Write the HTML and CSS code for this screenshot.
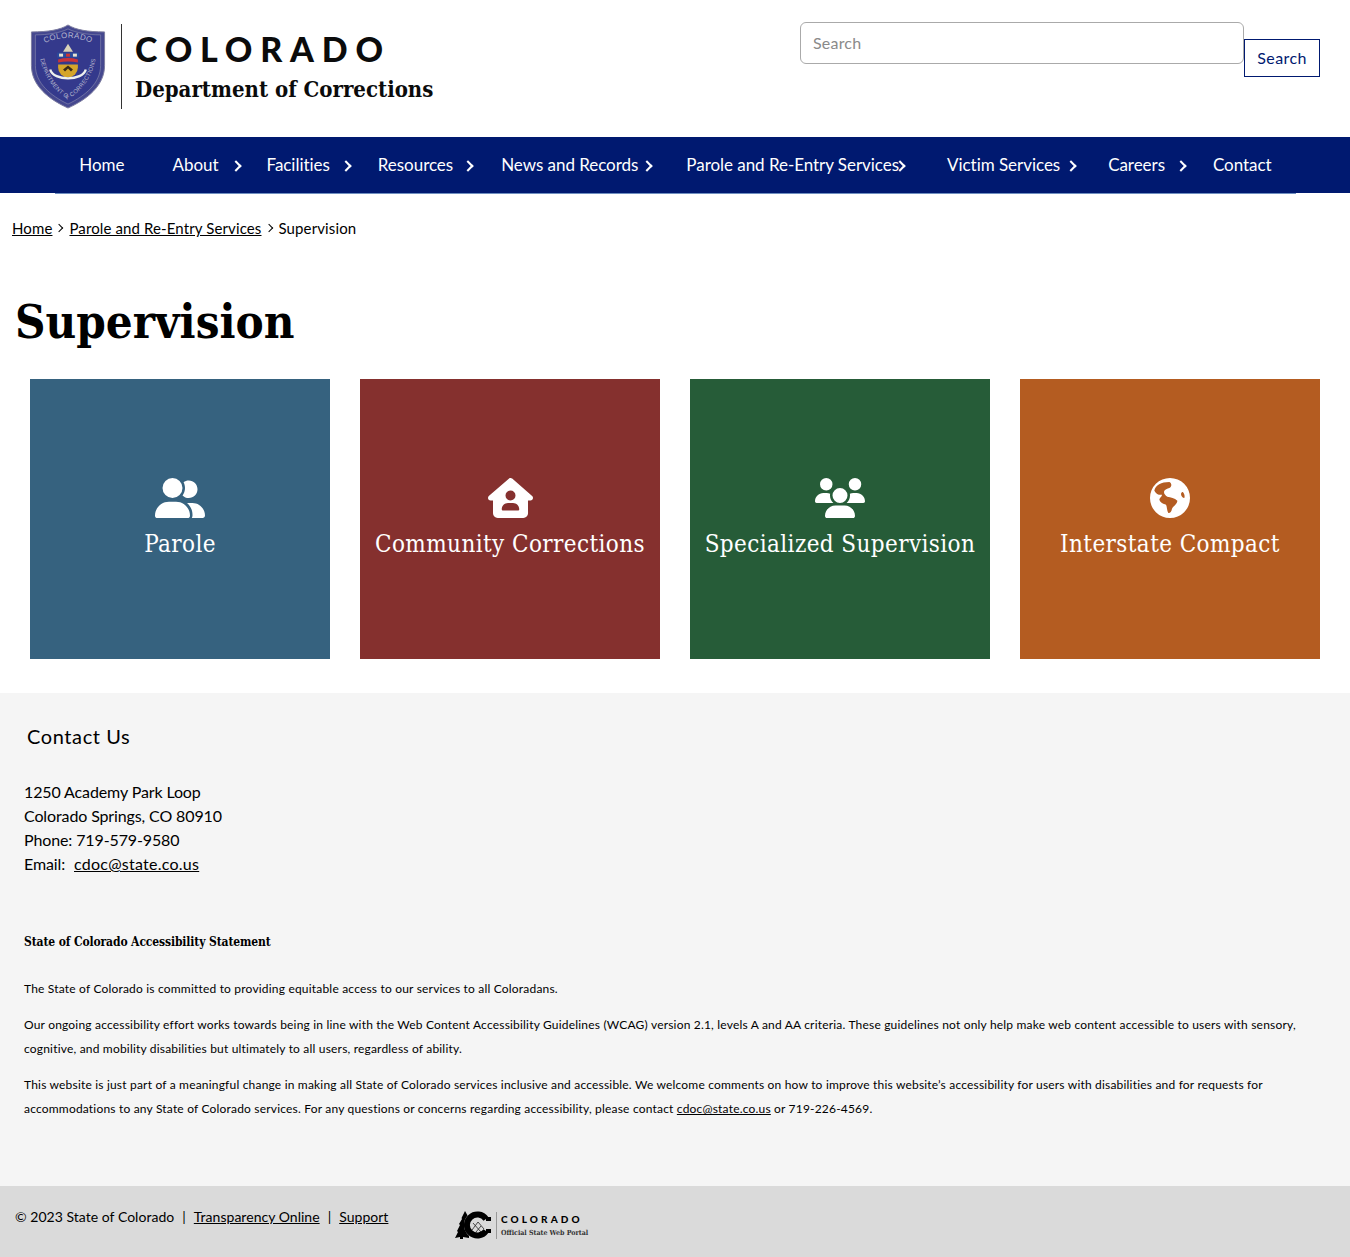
FILE: index.html
```html
<!DOCTYPE html>
<html lang="en">
<head>
	<meta charset="UTF-8">
	<title>Supervision | Department of Corrections</title>
	<link rel="stylesheet" href="styles.css">
</head>
<body>
	<header class="site-head">
		<a class="logo" href="#">
			<svg class="shield" viewBox="0 0 76 86">
				<path d="M38 1 C46 6 58 8 75 8 L75 42 C75 62 58 76 38 85 C18 76 1 62 1 42 L1 8 C18 8 30 6 38 1Z" fill="#45488f" stroke="#7d7da0" stroke-width="1"/>
				<path d="M38 5 C46 9 58 11 71 11 L71 42 C71 60 55 73 38 81 C21 73 5 60 5 42 L5 11 C18 11 30 9 38 5Z" fill="#34398c" stroke="#8d8fb0" stroke-width=".6"/>
				<path id="arc-top" d="M9 22 Q38 6 67 22" fill="none"/>
				<text class="shield-text"><textPath href="#arc-top" startOffset="50%" text-anchor="middle">COLORADO</textPath></text>
				<path id="arc-bot" d="M9 24 C9 50 24 68 38 76 C52 68 67 50 67 24" fill="none"/>
				<text class="shield-text small"><textPath href="#arc-bot" startOffset="50%" text-anchor="middle">DEPARTMENT OF CORRECTIONS</textPath></text>
				<path d="M38 20 l5 8 h-10z" fill="#d9d2b8"/>
				<rect x="27" y="29" width="22" height="5" fill="#2a4a9c"/>
				<rect x="29" y="30" width="4" height="3" fill="#e9e2d0"/>
				<rect x="36" y="30" width="4" height="3" fill="#c33"/>
				<rect x="43" y="30" width="4" height="3" fill="#e9e2d0"/>
				<path d="M28 36 q10 -3 20 0 v3 q-10 -2 -20 0z" fill="#c8333a"/>
				<path d="M28 41 h20 v3 a10 10 0 0 1 -20 0z" fill="#d5a52a"/>
				<path d="M33 46 l5 -4 l5 4 l-2 2 l-3 -3 l-3 3z" fill="#3a2b18"/>
				<path d="M20 46 C23 58 53 58 56 46" fill="none" stroke="#eef0ee" stroke-width="2.400"/>
			</svg>
			<span class="logo-text">
				<span class="logo-state">COLORADO</span>
				<span class="logo-dept">Department of Corrections</span>
			</span>
		</a>
		<form class="search">
			<input class="search-input" type="text" placeholder="Search">
			<button class="search-btn" type="button">Search</button>
		</form>
	</header>

	<nav class="main-nav">
		<ul>
			<li><a href="#">Home</a></li>
			<li class="has-sub"><a href="#">About</a></li>
			<li class="has-sub"><a href="#">Facilities</a></li>
			<li class="has-sub"><a href="#">Resources</a></li>
			<li class="has-sub"><a href="#">News and Records</a></li>
			<li class="has-sub"><a href="#">Parole and Re-Entry Services</a></li>
			<li class="has-sub"><a href="#">Victim Services</a></li>
			<li class="has-sub"><a href="#">Careers</a></li>
			<li><a href="#">Contact</a></li>
		</ul>
	</nav>

	<div class="crumbs">
		<a href="#">Home</a><i class="sep"></i><a href="#">Parole and Re-Entry Services</a><i class="sep"></i><span>Supervision</span>
	</div>

	<h1 class="page-title">Supervision</h1>

	<section class="cards">
		<a class="card blue" href="#">
			<svg class="icon" viewBox="0 0 640 512"><path d="M96 128a128 128 0 1 1 256 0A128 128 0 1 1 96 128zM0 482.3C0 383.8 79.8 304 178.3 304h91.4C368.2 304 448 383.8 448 482.3c0 16.4-13.3 29.7-29.7 29.7H29.7C13.3 512 0 498.7 0 482.3zM609.3 512H471.4c5.4-9.4 8.6-20.3 8.6-32v-8c0-60.7-27.1-115.2-69.8-151.8c2.4-.1 4.7-.2 7.1-.2h61.4C567.8 320 640 392.2 640 481.3c0 17-13.8 30.7-30.7 30.7zM432 256c-31 0-59-12.6-79.3-32.9C372.4 196.5 384 163.6 384 128c0-26.8-6.6-52.1-18.3-74.3C384.3 40.1 407.2 32 432 32c61.9 0 112 50.1 112 112s-50.1 112-112 112z"/></svg>
			<span>Parole</span>
		</a>
		<a class="card red" href="#">
			<svg class="icon" viewBox="0 0 576 512"><path d="M575.8 255.5c0 18-15 32.1-32 32.1h-32l.7 160.2c.2 35.5-28.5 64.3-64 64.3H128.1c-35.3 0-64-28.7-64-64V287.6H32c-18 0-32-14-32-32.1c0-9 3-17 10-24L266.4 8c7-7 15-8 22-8s15 2 21 7L564.8 231.5c8 7 12 15 11 24zM352 224a64 64 0 1 0 -128 0 64 64 0 1 0 128 0zm-96 96c-44.2 0-80 35.8-80 80c0 8.8 7.2 16 16 16H384c8.8 0 16-7.2 16-16c0-44.2-35.8-80-80-80H256z"/></svg>
			<span>Community Corrections</span>
		</a>
		<a class="card green" href="#">
			<svg class="icon" viewBox="0 0 640 512"><path d="M144 0a80 80 0 1 1 0 160A80 80 0 1 1 144 0zM512 0a80 80 0 1 1 0 160A80 80 0 1 1 512 0zM0 298.7C0 239.8 47.8 192 106.7 192h42.7c15.9 0 31 3.5 44.6 9.7c-1.3 7.2-1.9 14.7-1.9 22.3c0 38.2 16.8 72.5 43.3 96c-.2 0-.4 0-.7 0H21.3C9.6 320 0 310.4 0 298.7zM405.3 320c-.2 0-.4 0-.7 0c26.6-23.5 43.3-57.8 43.3-96c0-7.6-.7-15-1.9-22.3c13.6-6.3 28.7-9.7 44.6-9.7h42.7C592.2 192 640 239.8 640 298.7c0 11.8-9.6 21.3-21.3 21.3H405.3zM224 224a96 96 0 1 1 192 0 96 96 0 1 1 -192 0zM128 485.3C128 411.7 187.7 352 261.3 352H378.7C452.3 352 512 411.7 512 485.3c0 14.7-11.9 26.7-26.7 26.7H154.7c-14.7 0-26.7-11.9-26.7-26.7z"/></svg>
			<span>Specialized Supervision</span>
		</a>
		<a class="card orange" href="#">
			<svg class="icon" viewBox="0 0 120 120"><path fill-rule="evenodd" d="M60 0a60 60 0 1 1 0 120A60 60 0 1 1 60 0zM13 38C16 22 34 12 58 12C66 16 66 26 58 30C48 33 42 36 42 42C42 48 46 52 52 56C62 58 74 60 82 68C82 78 70 84 66 92C64 102 60 106 55 105C50 96 52 88 48 80C40 78 30 74 28 64C30 58 36 55 36 50C28 52 18 48 13 38zM98 42C103 46 105 54 103 60C98 60 93 54 93 48C94 44 96 42 98 42z"/></svg>
			<span>Interstate Compact</span>
		</a>
	</section>

	<section class="contact">
		<h2 class="contact-title">Contact Us</h2>
		<p class="address">
			1250 Academy Park Loop<br>
			Colorado Springs, CO 80910<br>
			Phone: 719-579-9580<br>
			Email: <a href="#">cdoc@state.co.us</a>
		</p>
		<h3 class="access-title">State of Colorado Accessibility Statement</h3>
		<div class="access">
			<p>The State of Colorado is committed to providing equitable access to our services to all Coloradans.</p>
			<p>Our ongoing accessibility effort works towards being in line with the Web Content Accessibility Guidelines (WCAG) version 2.1, levels A and AA criteria. These guidelines not only help make web content accessible to users with sensory, cognitive, and mobility disabilities but ultimately to all users, regardless of ability.</p>
			<p>This website is just part of a meaningful change in making all State of Colorado services inclusive and accessible. We welcome comments on how to improve this website’s accessibility for users with disabilities and for requests for accommodations to any State of Colorado services. For any questions or concerns regarding accessibility, please contact <a href="#">cdoc@state.co.us</a> or 719-226-4569.</p>
		</div>
	</section>

	<footer class="site-foot">
		<div class="foot-links">© 2023 State of Colorado<span class="pipe">|</span><a href="#">Transparency Online</a><span class="pipe">|</span><a href="#">Support</a></div>
		<a class="portal" href="#">
			<svg class="portal-mark" viewBox="0 0 36 28">
				<path d="M0 27 L3 21 L2 20 L5 14 L4 13 L7 8 L6.500 7 L10 0 L14 7 L14 27 L8 26 L8 28 L5 28 L5 26z"/>
				<circle cx="23" cy="14" r="14" fill="#dadada"/>
				<path d="M31 8 A10.500 10.500 0 1 0 31 20" fill="none" stroke="#000" stroke-width="6"/>
				<path d="M31 8 H36 M31 20 H36" stroke="#000" stroke-width="4"/>
				<path d="M17 19 L23 11 L29 18 M21 21 L26 15 M18 12 L26 21" fill="none" stroke="#222" stroke-width=".8"/>
			</svg>
			<span class="portal-text">
				<span class="portal-state">COLORADO</span>
				<span class="portal-sub">Official State Web Portal</span>
			</span>
		</a>
	</footer>
</body>
</html>
```

FILE: styles.css
```css
*{
	box-sizing: border-box;
}
body{
	margin: 0;
	font-family: "Lato", "Liberation Sans", sans-serif;
	font-size: 16px;
	color: #000;
	background: #fff;
}
a{
	color: inherit;
}

/* header */
.site-head{
	display: flex;
	justify-content: space-between;
	align-items: flex-start;
	height: 137px;
	padding: 22px 30px 0;
}
.logo{
	display: flex;
	align-items: stretch;
	height: 85px;
	margin-top: 2px;
	text-decoration: none;
}
.shield{
	width: 76px;
	height: 85px;
	margin-right: 15px;
}
.shield-text{
	font-family: "Liberation Sans", sans-serif;
	font-size: 8px;
	letter-spacing: .4px;
	fill: #b4b6cc;
}
.shield-text.small{
	font-size: 6px;
	letter-spacing: .2px;
}
.logo-text{
	display: flex;
	flex-direction: column;
	padding-left: 13px;
	border-left: 1px solid #333;
	color: #0b0b0b;
}
.logo-state{
	margin-top: 6px;
	font-size: 34px;
	line-height: 38px;
	font-weight: 900;
	letter-spacing: 7.800px;
}
.logo-dept{
	margin-top: 6px;
	font-family: "DejaVu Serif", serif;
	font-stretch: condensed;
	font-size: 22px;
	line-height: 30px;
	font-weight: 700;
}
.search{
	display: flex;
	align-items: flex-start;
}
.search-input{
	width: 444px;
	height: 42px;
	padding: 0 12px 2px;
	border: 1px solid #aaa;
	border-radius: 6px;
	font: 16px "Lato", sans-serif;
	letter-spacing: .2px;
}
.search-input::placeholder{
	color: #8a8a8a;
}
.search-btn{
	width: 76px;
	height: 38px;
	margin-top: 17px;
	padding: 0 0 2px;
	border: 1px solid #001970;
	background: #fff;
	color: #001970;
	font: 16px "Lato", sans-serif;
	letter-spacing: .4px;
}

/* nav */
.main-nav{
	height: 56px;
	background: #001970;
}
.main-nav ul{
	display: flex;
	justify-content: center;
	width: 1241px;
	height: 57px;
	margin: 0 0 0 55px;
	padding: 0;
	list-style: none;
	border-bottom: 1px solid #6f8fc0;
}
.main-nav li{
	position: relative;
	padding: 0 24px;
	line-height: 56px;
}
.main-nav a{
	color: #fff;
	text-decoration: none;
	font-size: 17px;
	letter-spacing: -.04px;
	white-space: nowrap;
}
.has-sub::after{
	content: "";
	position: absolute;
	left: 90%;
	top: 25px;
	width: 6px;
	height: 6px;
	margin-left: -1px;
	border-top: 2px solid #fff;
	border-right: 2px solid #fff;
	transform: rotate(45deg);
}

/* breadcrumb */
.crumbs{
	display: flex;
	align-items: center;
	height: 24px;
	margin-top: 23px;
	padding-left: 12px;
	font-size: 15px;
	letter-spacing: .12px;
}
.sep{
	width: 6px;
	height: 6px;
	margin: 0 7px 0 4px;
	border-top: 1.500px solid #000;
	border-right: 1.500px solid #000;
	transform: rotate(45deg);
}

.page-title{
	margin: 52px 0 0 15px;
	font-family: "DejaVu Serif", serif;
	font-stretch: condensed;
	font-size: 47px;
	line-height: 60px;
	font-weight: 700;
}

/* cards */
.cards{
	display: grid;
	grid-template-columns: repeat(4, 300px);
	gap: 30px;
	margin-top: 27px;
	padding-left: 30px;
}
.card{
	display: flex;
	flex-direction: column;
	align-items: center;
	height: 280px;
	padding-top: 99px;
	color: #fff;
	text-decoration: none;
	font-family: "DejaVu Serif", serif;
	font-stretch: condensed;
	font-size: 24px;
	letter-spacing: .4px;
	line-height: 30px;
}
.card span{
	margin-top: 11px;
}
.icon{
	height: 40px;
	fill: #fff;
}
.blue{
	background: #36627f;
}
.red{
	background: #85302e;
}
.green{
	background: #265c38;
}
.orange{
	background: #b45c21;
}

/* contact */
.contact{
	height: 493px;
	margin-top: 34px;
	padding: 30px 24px 0;
	background: #f5f5f5;
}
.contact-title{
	margin: 0 0 0 3px;
	font-size: 20px;
	line-height: 27px;
	letter-spacing: .6px;
	font-weight: 400;
}
.address{
	margin: 30px 0 0;
	font-size: 16px;
	line-height: 24px;
	letter-spacing: -.12px;
}
.address a{
	margin-left: 5px;
	letter-spacing: .25px;
}
.access-title{
	margin: 54px 0 0;
	font-family: "DejaVu Serif", serif;
	font-stretch: condensed;
	font-size: 12px;
	line-height: 24px;
	letter-spacing: -.12px;
	font-weight: 700;
}
.access{
	margin-top: 23px;
	font-size: 12px;
	line-height: 24px;
	letter-spacing: .19px;
}
.access p{
	margin: 0 0 12px;
}

/* footer */
.site-foot{
	display: flex;
	align-items: flex-start;
	height: 71px;
	padding: 19px 0 0 15px;
	background: #dadada;
	font-size: 14px;
	letter-spacing: .03px;
}
.foot-links{
	width: 440px;
	line-height: 24px;
}
.pipe{
	margin: 0 8px;
}
.portal{
	display: flex;
	align-items: center;
	margin-top: 6px;
	text-decoration: none;
}
.portal-mark{
	width: 36px;
	height: 28px;
	margin-right: 5px;
}
.portal-text{
	display: flex;
	flex-direction: column;
	padding-left: 4px;
	border-left: 1px solid #999;
}
.portal-state{
	font-size: 10px;
	line-height: 14px;
	font-weight: 900;
	letter-spacing: 3.100px;
}
.portal-sub{
	margin-top: 1px;
	font-family: "DejaVu Serif", serif;
	font-stretch: condensed;
	font-size: 7px;
	line-height: 12px;
	letter-spacing: 0;
	font-weight: 700;
	color: #333;
}
```
